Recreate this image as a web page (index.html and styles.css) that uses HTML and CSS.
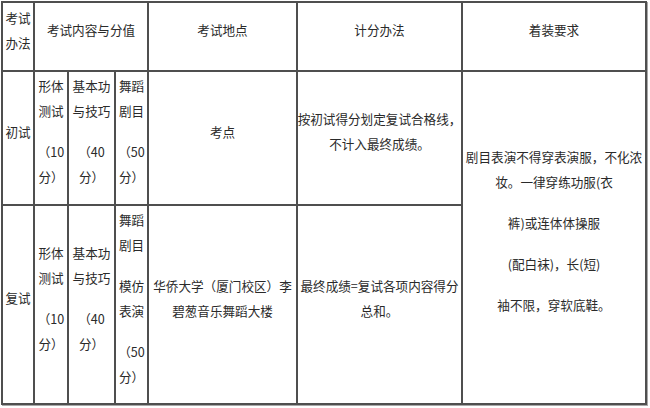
FILE: index.html
```html
<!DOCTYPE html>
<html lang="zh-CN">
<head>
<meta charset="utf-8">
<title>考试办法</title>
<link rel="stylesheet" href="styles.css">
</head>
<body>
<div class="sheet">
  <div class="cell"><p>考试<br>办法</p></div>
  <div class="cell span3"><p>考试内容与分值</p></div>
  <div class="cell"><p>考试地点</p></div>
  <div class="cell"><p>计分办法</p></div>
  <div class="cell"><p>着装要求</p></div>

  <div class="cell"><p>初试</p></div>
  <div class="cell"><p>形体<br>测试</p><p><span class="pn">（</span>10<br>分<span class="pn">）</span></p></div>
  <div class="cell"><p>基本功<br>与技巧</p><p><span class="pn">（</span>40<br>分<span class="pn">）</span></p></div>
  <div class="cell"><p>舞蹈<br>剧目</p><p><span class="pn">（</span>50<br>分<span class="pn">）</span></p></div>
  <div class="cell"><p>考点</p></div>
  <div class="cell"><p>按初试得分划定复试合格线，<br>不计入最终成绩。</p></div>
  <div class="cell span-rows"><p>剧目表演不得穿表演服，不化浓<br>妆。一律穿练功服(衣</p><p>裤)或连体体操服</p><p>(配白袜)，长(短)</p><p>袖不限，穿软底鞋。</p></div>

  <div class="cell"><p>复试</p></div>
  <div class="cell"><p>形体<br>测试</p><p><span class="pn">（</span>10<br>分<span class="pn">）</span></p></div>
  <div class="cell"><p>基本功<br>与技巧</p><p><span class="pn">（</span>40<br>分<span class="pn">）</span></p></div>
  <div class="cell"><p>舞蹈<br>剧目</p><p>模仿<br>表演</p><p><span class="pn">（</span>50<br>分<span class="pn">）</span></p></div>
  <div class="cell"><p>华侨大学<span class="pn">（</span>厦门校区<span class="pn">）</span>李<br>碧葱音乐舞蹈大楼</p></div>
  <div class="cell"><p>最终成绩=复试各项内容得分<br>总和。</p></div>
</div>
</body>
</html>
```
FILE: styles.css
```css
html, body {
  margin: 0;
  background: #ffffff;
}
body {
  padding: 1px;
  font-family: "Noto Sans CJK SC", "Microsoft YaHei", sans-serif;
  font-size: 12.6px;
  color: #2a2a2a;
}
.sheet {
  display: grid;
  grid-template-columns: 30px 32px 45px 31px 147px 163px 182px;
  grid-template-rows: 67px 132px 197px;
  gap: 2px;
  padding: 2px;
  width: max-content;
  background: #4f4f4f;
  box-shadow: 1px 1px 0 #a8a8a8;
}
.cell {
  background: #ffffff;
  display: flex;
  flex-direction: column;
  justify-content: center;
  align-items: center;
  text-align: center;
  padding-bottom: 14px;
  line-height: 25px;
  white-space: nowrap;
}
.cell p {
  margin: 0;
}
.cell p + p {
  margin-top: 16px;
}
.pn {
  font-family: "Noto Sans CJK TC", "Noto Sans CJK SC", sans-serif;
}
.span3 {
  grid-column: span 3;
}
.span-rows {
  grid-row: span 2;
}
```
